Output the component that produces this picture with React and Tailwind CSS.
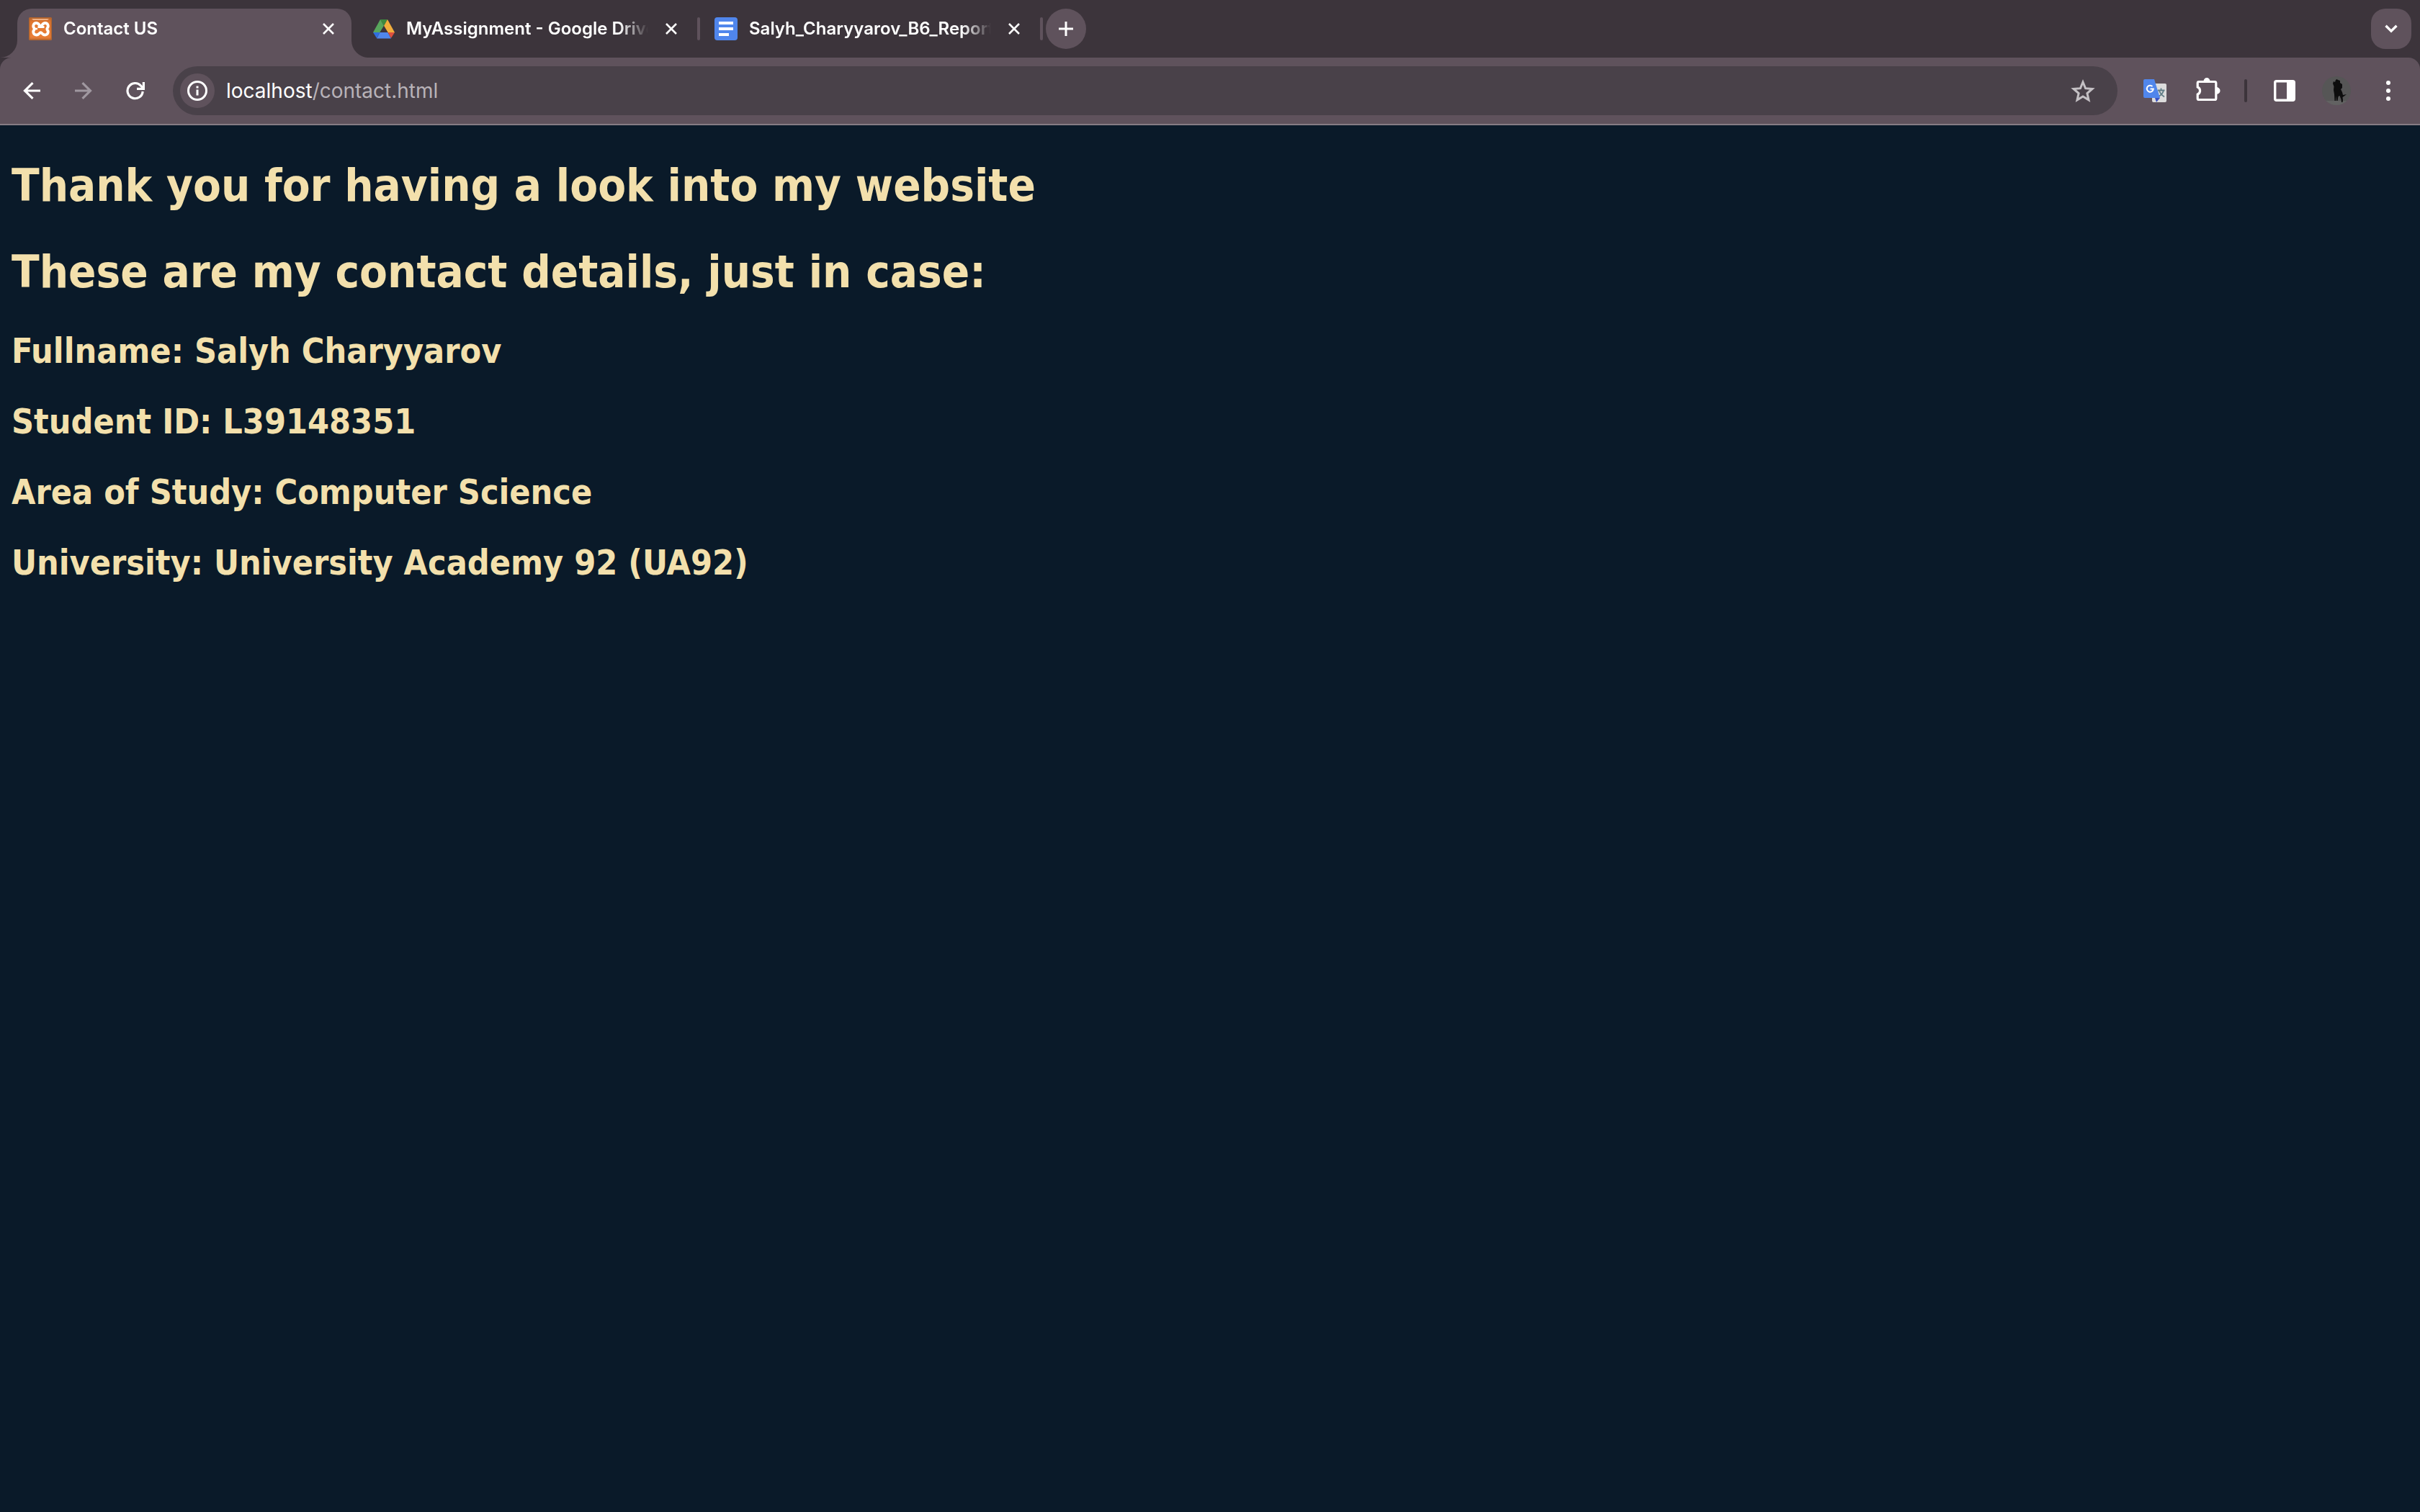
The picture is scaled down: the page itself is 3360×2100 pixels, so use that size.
import React from "react";

const ui = "font-['Inter',sans-serif]";

function Close() {
  return (
    <svg viewBox="0 0 16 16" className="size-4" fill="none" stroke="#fff" strokeWidth="2.6">
      <path d="M1 1l14 14M15 1L1 15" />
    </svg>
  );
}

function XamppIcon() {
  return (
    <svg viewBox="0 0 32 32" className="size-8 shrink-0">
      <defs>
        <linearGradient id="xg" x1="0" y1="0" x2="0" y2="1">
          <stop offset="0" stopColor="#b5622a" />
          <stop offset=".2" stopColor="#e0762f" />
          <stop offset=".85" stopColor="#ea7f37" />
          <stop offset="1" stopColor="#c86c30" />
        </linearGradient>
      </defs>
      <rect width="32" height="32" rx="2" fill="url(#xg)" />
      <rect x=".7" y=".7" width="30.6" height="30.6" rx="2" fill="none" stroke="#b0642f" strokeWidth="1.400" />
      <path d="M4 2h24l-2 2H6z" fill="#f0b083" />
      <path
        d="M16.500 12.300C14.500 12.300 14.500 8 10.300 8 6.500 8 5 12.500 7.500 15.300c.5.700.5 1.200 0 2C5 20 6.500 24.500 10.500 24.500c4 0 4-3.300 6-3.300s2 3.300 6 3.300c4 0 5.500-4.500 3-7.200-.5-.8-.5-1.300 0-2C28 12.500 26.500 8 22.700 8c-4.200 0-4.200 4.300-6.200 4.300z"
        fill="none"
        stroke="#fff"
        strokeWidth="3.800"
        strokeLinejoin="round"
      />
      <path d="M12.500 13.500h9" fill="none" stroke="#fff" strokeWidth="3" />
      <path d="M8 16h4" fill="none" stroke="#fff" strokeWidth="2.500" />
    </svg>
  );
}

function DriveIcon() {
  return (
    <svg viewBox="0 0 30 27" className="w-[30px] h-[27px] shrink-0">
      <path d="M10 0h10l-5 9z" fill="#3c8a3f" />
      <path d="M10 0l5 9-5.500 9H0z" fill="#58a65c" />
      <path d="M20 0l10 18h-9.500L15 9z" fill="#f1ae3c" />
      <path d="M0 18h9.500L5 26z" fill="#2f6fe0" />
      <path d="M9.500 18h11l4.500 8.500H5z" fill="#5086ec" />
      <path d="M20.500 18H30l-5 8z" fill="#dc5040" />
      <path d="M15 9l5.500 9h-11z" fill="#3c343b" />
    </svg>
  );
}

function DocsIcon() {
  return (
    <svg viewBox="0 0 32 32" className="size-8 shrink-0">
      <rect width="32" height="32" rx="4" fill="#5086ec" />
      <path d="M6 8h20M6 16h20M6 24h14" stroke="#fff" strokeWidth="4" />
    </svg>
  );
}

function TabBody({ icon, title, label }) {
  return (
    <>
      {icon}
      <span className="ml-4 min-w-0 flex-1 overflow-hidden whitespace-nowrap text-left text-[24px] font-semibold leading-8 [mask-image:linear-gradient(to_right,#000_calc(100%-40px),transparent)]">
        {title}
      </span>
      <button aria-label={label} className="ml-6 flex size-4 shrink-0 items-center justify-center">
        <Close />
      </button>
    </>
  );
}

function Separator({ className }) {
  return <div className={"h-8 w-1 shrink-0 rounded-full " + className} />;
}

function TabStrip() {
  return (
    <div className="flex h-20 items-start bg-[#3c343b] pl-6 pr-3 pt-3">
      <div className="relative flex h-[68px] w-[464px] shrink-0 rounded-t-[20px] bg-[#5f525c] pb-3 pl-4 pr-6">
        <svg viewBox="0 0 24 24" className="absolute bottom-0 -left-6 size-6" fill="#5f525c">
          <path d="M24 0v24H0A24 24 0 0 0 24 0z" />
        </svg>
        <svg viewBox="0 0 24 24" className="absolute bottom-0 -right-6 size-6" fill="#5f525c">
          <path d="M0 0v24h24A24 24 0 0 1 0 0z" />
        </svg>
        <div className="flex min-w-0 flex-1 items-center">
          <TabBody icon={<XamppIcon />} title="Contact US" label="Close Contact US" />
        </div>
      </div>
      <div className="flex h-14 w-[484px] shrink-0 items-center pl-[30px]">
        <TabBody icon={<DriveIcon />} title="MyAssignment - Google Drive" label="Close MyAssignment" />
        <Separator className="ml-7 bg-[#5f525c]" />
      </div>
      <div className="flex h-14 w-[476px] shrink-0 items-center pl-5">
        <TabBody icon={<DocsIcon />} title="Salyh_Charyyarov_B6_Report" label="Close report" />
        <Separator className="ml-7 bg-[#5f525c]" />
      </div>
      <button aria-label="New tab" className="ml-1 flex size-14 shrink-0 items-center justify-center rounded-full bg-[#5f525c]">
        <svg viewBox="0 0 20 20" className="size-5" stroke="#fff" strokeWidth="3">
          <path d="M10 0v20M0 10h20" />
        </svg>
      </button>
      <button aria-label="Search tabs" className="ml-auto flex size-14 shrink-0 items-center justify-center rounded-[20px] bg-[#5f525c]">
        <svg viewBox="0 0 18 12" className="h-3 w-[18px]" fill="none" stroke="#fff" strokeWidth="3.400">
          <path d="M1.500 1.800L9 9.200l7.500-7.400" />
        </svg>
      </button>
    </div>
  );
}

function Arrow({ className }) {
  return (
    <svg viewBox="0 0 24 24" className={"size-6 " + className} fill="none" stroke="currentColor" strokeWidth="3.200">
      <path d="M24 12H3M13.500 1.200L2.500 12l11 10.800" />
    </svg>
  );
}

function TranslateIcon() {
  return (
    <svg viewBox="0 0 32 32" className="size-8">
      <rect x="12" y="6" width="20" height="26" rx="2" fill="#dcdcdc" />
      <path d="M20 15.500h9.500M24.500 12.500v3M28 15.500c-1 4-4 7-7.500 9M22 16c1 3 4 6.500 7 8.500" fill="none" stroke="#607d86" strokeWidth="1.800" />
      <path d="M16 26h7l-5 6z" fill="#3a51c0" />
      <path d="M2 0h13l8 26H2a2 2 0 0 1-2-2V2a2 2 0 0 1 2-2z" fill="#5086ec" />
      <path d="M12.500 10A4.500 4.500 0 1 0 13.800 13.500H9.500" fill="none" stroke="#fff" strokeWidth="2" />
    </svg>
  );
}

function PuzzleIcon() {
  return (
    <svg viewBox="0 0 34 34" className="size-[34px]">
      <path d="M10.500 6a4.500 5 0 0 1 9 0zM28 14a5 4.500 0 0 1 0 10z" fill="#fff" />
      <path
        d="M4 6.500h22a1.800 1.800 0 0 1 1.800 1.800v21.400a1.800 1.800 0 0 1-1.800 1.800H4a1.800 1.800 0 0 1-1.800-1.800V24a5.400 5.400 0 0 0 0-10V8.300A1.800 1.800 0 0 1 4 6.500z"
        fill="none"
        stroke="#fff"
        strokeWidth="3.200"
      />
    </svg>
  );
}

function Avatar() {
  return (
    <svg viewBox="0 0 40 40" className="size-10">
      <clipPath id="av"><circle cx="20" cy="20" r="20" /></clipPath>
      <g clipPath="url(#av)">
        <path d="M0 0h40v40H0z" fill="#565656" />
        <path d="M0 34h40v6H0z" fill="#626262" />
        <path
          d="M22 5l3 1v3l3 2v5l-2 2 2 4 1 4 5-1-4 3-1.500 1 .5 4-.5 3h-1.500l-.500-4-2-5-2 1-1 6h-1.500l-.5-7-.500 7h-1.500l-.500-9-1-6 .500-5-1.500-4 1-3 2 1 1-3 1.500-1z"
          fill="#0d0d0d"
        />
      </g>
    </svg>
  );
}

function Toolbar() {
  return (
    <div className="bg-[#3c343b]">
      <div className="flex h-[94px] items-center rounded-t-2xl border-b-2 border-[#867c84] bg-[#5f525c] pl-8 pr-[41px]">
        <button aria-label="Back" className="text-white"><Arrow className="" /></button>
        <button aria-label="Forward" className="ml-12 text-[#a098a0]"><Arrow className="rotate-180" /></button>
        <button aria-label="Reload" className="ml-[47px]">
          <svg viewBox="0 0 26 26" className="size-[26px]" fill="none" stroke="#fff" strokeWidth="3.200">
            <path d="M23.200 14A10.600 10.600 0 1 1 20.500 6l3 3.500" />
            <path d="M24.400 1v9.400H15" />
          </svg>
        </button>
        <div className="ml-[39px] flex h-[68px] flex-1 items-center rounded-full bg-[#494149] pl-[10px] pr-[31px]">
          <button aria-label="Site information" className="flex size-12 shrink-0 items-center justify-center rounded-full bg-[#5f525c]">
            <svg viewBox="0 0 28 28" className="size-7" fill="none" stroke="#fff" strokeWidth="3">
              <circle cx="14" cy="14" r="12.500" />
              <path d="M14 12.500v8M14 7.500v3" />
            </svg>
          </button>
          <a href="#top" className="ml-4 flex-1 text-[28px] leading-9 text-white">
            localhost<span className="text-[#b8b2b8]">/contact.html</span>
          </a>
          <button aria-label="Bookmark this page">
            <svg viewBox="0 0 34 32" className="h-8 w-[34px]" fill="none" stroke="#c4c0c4" strokeWidth="3">
              <path d="M17 4l3.600 8.700 9.400.8-7.100 6.100 2.100 9.200L17 23.900l-8 4.900 2.100-9.200L4 13.500l9.400-.8z" />
            </svg>
          </button>
        </div>
        <button aria-label="Translate" className="ml-9"><TranslateIcon /></button>
        <button aria-label="Extensions" className="ml-[41px] pb-1"><PuzzleIcon /></button>
        <Separator className="ml-[33px] bg-[#3c343b]" />
        <button aria-label="Side panel" className="ml-[37px]">
          <svg viewBox="0 0 30 30" className="size-[30px]">
            <rect x="1.700" y="1.700" width="26.600" height="26.600" rx="2" fill="none" stroke="#fff" strokeWidth="3.400" />
            <path d="M18 1h10v28H18z" fill="#fff" />
          </svg>
        </button>
        <button aria-label="Profile" className="ml-[37px]"><Avatar /></button>
        <button aria-label="Menu" className="ml-[49px]">
          <svg viewBox="0 0 6 28" className="h-7 w-[6px]" fill="#fff">
            <circle cx="3" cy="3" r="3" />
            <circle cx="3" cy="14" r="3" />
            <circle cx="3" cy="25" r="3" />
          </svg>
        </button>
      </div>
    </div>
  );
}

const details = [
  "Fullname: Salyh Charyyarov",
  "Student ID: L39148351",
  "Area of Study: Computer Science",
  "University: University Academy 92 (UA92)",
];

export default function App() {
  return (
    <div id="top" className="flex min-h-screen flex-col bg-[#0a1a29]">
      <header className={ui + " text-white"}>
        <TabStrip />
        <Toolbar />
      </header>
      <main className="px-4 pt-[46px] font-['DejaVu_Sans_Condensed','DejaVu_Sans',sans-serif] font-bold text-[#f3e0ac]">
        <h1 className="mb-11 text-[63px] leading-[76px]">Thank you for having a look into my website</h1>
        <h1 className="mb-[42px] text-[63px] leading-[76px]">These are my contact details, just in case:</h1>
        {details.map((line) => (
          <h2 key={line} className="mb-10 text-[48px] leading-[58px]">{line}</h2>
        ))}
      </main>
    </div>
  );
}
